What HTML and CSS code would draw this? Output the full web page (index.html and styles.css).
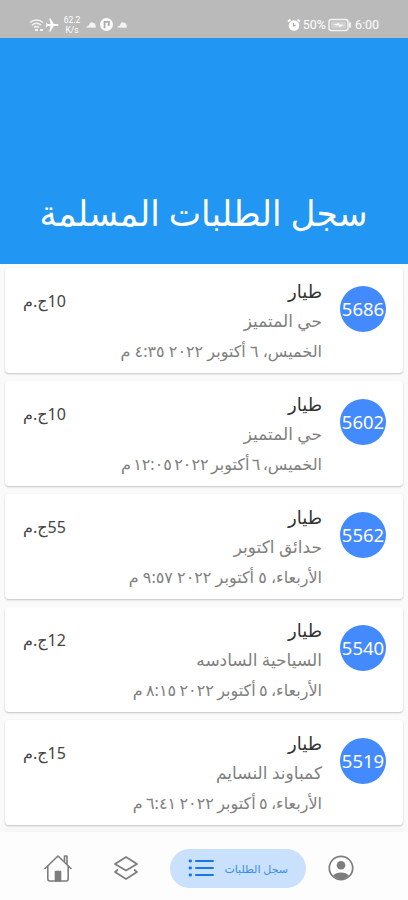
FILE: index.html
```
<!DOCTYPE html>
<html lang="ar" dir="rtl">
<head>
    <meta charset="UTF-8">
    <meta name="viewport" content="width=device-width, initial-scale=1.0">
    <title>سجل الطلبات</title>
    <link rel="stylesheet" href="styles.css">
</head>
<body>

    <!-- Status bar -->
    <div class="status-bar" dir="ltr">
        <div class="status-left">
            <svg class="wifi" width="16" height="14" viewBox="0 0 16 14" fill="none" stroke="#f4f4f4" stroke-width="1.4">
                <path d="M1 4.5Q7.500-.5 14 4.500M3 7Q7.500 3.500 12 7M5 9.500Q7.500 7.500 10 9.500"/>
                <path d="M6 12h3M11 12h3" stroke-width="1.800"/>
            </svg>
            <svg width="14" height="14" viewBox="0 0 24 24" fill="#fff">
                <path d="M23 12c0-1-.8-1.600-1.800-1.600H15L9.500 1H7l2.800 9.400H4.600L2.600 8H1l1.200 4L1 16h1.600l2-2.400h5.200L7 23h2.500l5.500-9.400h6.200c1 0 1.800-.6 1.800-1.600z"/>
            </svg>
            <div class="speed"><span>62.2</span><span>K/s</span></div>
            <svg class="cloud" width="10" height="8" viewBox="0 0 10 8" fill="#f4f4f4">
                <path d="M0 6.500 2 4.500l1 .4Q3.200 1.500 6 1.200L8.800 2.600Q10 4.500 9.600 6.800z"/>
            </svg>
            <svg class="dot" width="13" height="13" viewBox="0 0 12 12">
                <circle cx="6" cy="6" r="6" fill="#fafafa"/>
                <path d="M4.200 9.500V3.500h4v2.800H7" fill="none" stroke="#aaa" stroke-width="1.600"/>
            </svg>
            <svg class="cloud" width="10" height="8" viewBox="0 0 10 8" fill="#f4f4f4">
                <path d="M0 6.500 2 4.500l1 .4Q3.200 1.500 6 1.200L8.800 2.600Q10 4.500 9.600 6.800z"/>
            </svg>
        </div>
        <div class="status-right">
            <svg width="14" height="14" viewBox="0 0 14 14">
                <circle cx="7" cy="7.500" r="5.300" fill="#fff"/>
                <path d="M1 3.500 3.500 1.500M13 3.500 10.500 1.500" stroke="#fff" stroke-width="1.800"/>
                <path d="M6.500 5v3l2.200-1" stroke="#aaa" stroke-width="1.200" fill="none"/>
            </svg>
            <span class="percent">50%</span>
            <svg class="battery" width="24" height="14" viewBox="0 0 24 14">
                <rect x="1" y="1.500" width="19" height="11" rx="2.500" fill="none" stroke="#f4f4f4" stroke-width="1.500"/>
                <rect x="3" y="3.500" width="15" height="7" rx="1" fill="#d0d0d0"/>
                <path d="M5 7 11 5v1.500l5 .5-5 2V7.500z" fill="#fff"/>
                <path d="M22 4.500v5" stroke="#f4f4f4" stroke-width="2"/>
            </svg>
            <span class="clock">6:00</span>
        </div>
    </div>

    <header class="header">
        <h1><span>سجل الطلبات المسلمة</span></h1>
    </header>

    <!-- Orders -->
    <main class="orders">
        <div class="card">
            <div class="badge">5686</div>
            <div class="info">
                <p class="name">طيار</p>
                <p class="place">حي المتميز</p>
                <p class="date">الخميس، ٦ أكتوبر ٢٠٢٢ ٤:٣٥ م</p>
            </div>
            <div class="price">10ج.م</div>
        </div>
        <div class="card">
            <div class="badge">5602</div>
            <div class="info">
                <p class="name">طيار</p>
                <p class="place">حي المتميز</p>
                <p class="date tighter">الخميس، ٦ أكتوبر ٢٠٢٢ ١٢:٠٥ م</p>
            </div>
            <div class="price">10ج.م</div>
        </div>
        <div class="card">
            <div class="badge">5562</div>
            <div class="info">
                <p class="name">طيار</p>
                <p class="place">حدائق اكتوبر</p>
                <p class="date">الأربعاء، ٥ أكتوبر ٢٠٢٢ ٩:٥٧ م</p>
            </div>
            <div class="price">55ج.م</div>
        </div>
        <div class="card">
            <div class="badge">5540</div>
            <div class="info">
                <p class="name">طيار</p>
                <p class="place">السياحية السادسه</p>
                <p class="date tight">الأربعاء، ٥ أكتوبر ٢٠٢٢ ٨:١٥ م</p>
            </div>
            <div class="price">12ج.م</div>
        </div>
        <div class="card">
            <div class="badge">5519</div>
            <div class="info">
                <p class="name">طيار</p>
                <p class="place">كمباوند النسايم</p>
                <p class="date tight">الأربعاء، ٥ أكتوبر ٢٠٢٢ ٦:٤١ م</p>
            </div>
            <div class="price">15ج.م</div>
        </div>
    </main>

    <!-- Bottom navigation -->
    <nav class="nav">
        <a class="nav-item">
            <svg width="26" height="26" viewBox="0 0 26 26" fill="none" stroke="#7d7d7d" stroke-width="1.700">
                <circle cx="13" cy="13" r="11.700"/>
                <circle cx="13" cy="10.300" r="4.300" fill="#7d7d7d" stroke="none"/>
                <path d="M5 20.500Q8 17.500 13 17.500T21 20.500Q17.500 24.600 13 24.600T5 20.500z" fill="#7d7d7d" stroke="none"/>
            </svg>
        </a>
        <a class="nav-item active">
            <span>سجل الطلبات</span>
            <svg width="26" height="20" viewBox="0 0 26 20" stroke="#1976e8" stroke-width="2" stroke-linecap="round">
                <path d="M8 3h17M8 10h17M8 17h17"/>
                <path d="M2 3h.6M2 10h.6M2 17h.6" stroke-width="2.800"/>
            </svg>
        </a>
        <a class="nav-item layers">
            <svg width="26" height="26" viewBox="0 0 26 26" fill="none" stroke="#7d7d7d" stroke-width="1.700" stroke-linejoin="round" stroke-linecap="round">
                <path d="M13 2 24 9 13 15.500 2 9z"/>
                <path d="M4.500 15 2 17 13 24 24 17 21.500 15"/>
            </svg>
        </a>
        <a class="nav-item home">
            <svg width="30" height="28" viewBox="0 0 30 28" fill="none" stroke="#7d7d7d" stroke-width="1.600" stroke-linejoin="round" stroke-linecap="round">
                <path d="M2 14.500 15 2 28 14.500"/>
                <path d="M4.800 12.500v12Q4.800 27 6.800 27h16.400Q25.200 27 25.200 25V12.500"/>
                <path d="M21.500 7.500V2h2.500v8"/>
                <path d="M12.500 27V17.500h5V27z" fill="#7d7d7d"/>
            </svg>
        </a>
    </nav>

</body>
</html>
```
FILE: styles.css
```
* {
    box-sizing: border-box;
}

body {
    margin: 0;
    height: 900px;
    display: flex;
    flex-direction: column;
    overflow: hidden;
    background-color: #fafafa;
    font-family: "Noto Sans", "DejaVu Sans", sans-serif;
}

p,
h1 {
    margin: 0;
    font-weight: normal;
}

/* Status bar */
.status-bar {
    height: 38px;
    padding: 11px 29px 0;
    display: flex;
    justify-content: space-between;
    background-color: #bababa;
    color: #fff;
    font-family: Roboto, sans-serif;
    font-size: 12.5px;
}

.status-left,
.status-right {
    height: 27px;
    display: flex;
    align-items: center;
}

.speed {
    width: 18px;
    margin: 0 5px 0 4px;
    display: flex;
    flex-direction: column;
    text-align: center;
    font-size: 8.5px;
    line-height: 10px;
}

.dot {
    margin: 0 4px;
}

.percent {
    margin: 0 2px;
}

.clock {
    margin-left: 3px;
}

/* Header */
.header {
    height: 226px;
    padding: 145px 41px 0;
    background-color: #2196f3;
    color: #fff;
}

.header h1 {
    font-size: 36px;
    line-height: 60px;
    white-space: nowrap;
}

.header h1 span {
    display: inline-block;
    transform: scaleX(0.955);
    transform-origin: right center;
}

/* Order cards */
.orders {
    height: 568px;
    padding: 4px 5px 0;
    display: flex;
    flex-direction: column;
    gap: 8px;
}

.card {
    height: 105px;
    padding: 0 17px 0 18px;
    flex-shrink: 0;
    display: flex;
    background-color: #fff;
    border-radius: 4px;
    box-shadow: 0 1px 2px rgba(0, 0, 0, 0.22);
}

.badge {
    width: 46px;
    height: 46px;
    margin-top: 18px;
    padding-bottom: 2px;
    display: flex;
    align-items: center;
    justify-content: center;
    border-radius: 50%;
    background-color: #448aff;
    color: #fff;
    font-size: 18.5px;
}

.info {
    flex: 1;
    padding-top: 8px;
    margin-right: 18px;
    white-space: nowrap;
}

.name {
    font-size: 18px;
    line-height: 30px;
    color: #333;
}

.place,
.date {
    font-size: 16px;
    line-height: 30px;
    color: #808080;
}

.place {
    font-size: 17px;
}

.tight {
    word-spacing: -0.8px;
}

.tighter {
    word-spacing: -1.8px;
}

.price {
    padding-top: 20px;
    font-size: 16px;
    line-height: 26px;
    color: #444;
}

/* Bottom navigation */
.nav {
    height: 68px;
    padding: 4px 54px 0 0;
    display: flex;
    align-items: center;
    background-color: #fdfdfd;
    box-shadow: 0 0 14px rgba(0, 0, 0, 0.04);
}

.nav-item {
    display: flex;
}

.nav-item.active {
    width: 136px;
    height: 39px;
    margin-right: 22px;
    padding: 0 18px;
    align-items: center;
    justify-content: space-between;
    border-radius: 20px;
    background-color: #c9e1fc;
    color: #3c8bea;
    font-size: 11px;
}

.nav-item.layers {
    margin-right: 31px;
}

.nav-item.home {
    margin-right: 40px;
}
```
